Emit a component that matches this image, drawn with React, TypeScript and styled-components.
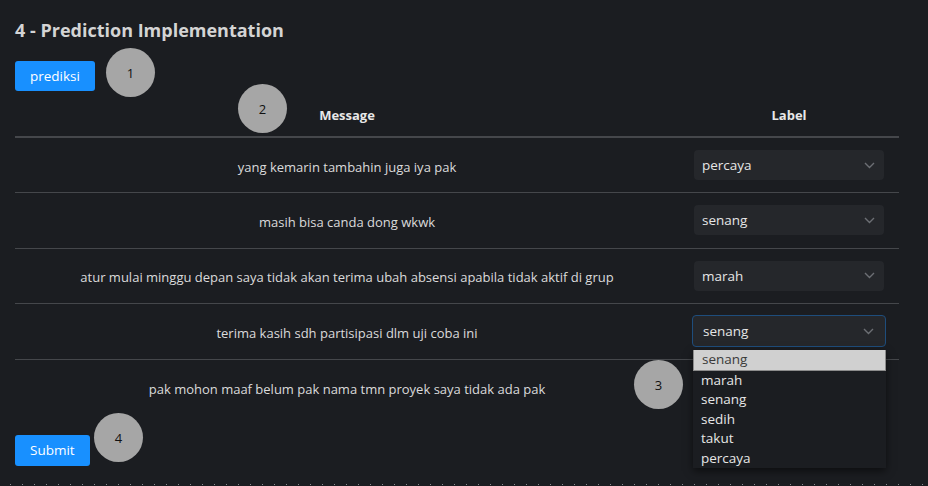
import styled, { createGlobalStyle } from "styled-components";

const GlobalStyle = createGlobalStyle`
  html, body {
    margin: 0;
    padding: 0;
    background-color: #1b1d21;
    font-family: "Open Sans", "Noto Sans", sans-serif;
    color: rgba(255, 255, 255, 0.85);
  }
`;

const Page = styled.div`
  position: relative;
  width: 928px;
  height: 486px;
  box-sizing: border-box;
  padding: 16px 29px 0 15px;
  overflow: hidden;
  &::after {
    content: "";
    position: absolute;
    left: 0;
    right: 0;
    bottom: 1px;
    height: 1px;
    background: repeating-linear-gradient(
      to right,
      transparent 0,
      transparent 10px,
      #8a8c90 10px,
      #8a8c90 11px,
      transparent 11px,
      transparent 12px
    );
  }
`;

const Title = styled.h2`
  margin: 0;
  font-size: 18px;
  font-weight: 700;
  line-height: 28px;
  color: #d4d4d4;
`;

const Button = styled.button<{ $h: number }>`
  display: block;
  height: ${(p) => p.$h}px;
  padding: 0 15px;
  border: none;
  border-radius: 3px;
  background-color: #1890ff;
  color: #fff;
  font-family: inherit;
  font-size: 13.5px;
`;

const Table = styled.table`
  width: 100%;
  border-collapse: collapse;
  margin-top: 2px;
  font-size: 13px;
`;

const HeadCell = styled.th`
  height: 43px;
  padding: 0;
  text-align: center;
  font-weight: 700;
  color: #e8e8e8;
  border-bottom: 2px solid #45474b;
`;

const Row = styled.tr<{ $last?: boolean }>`
  border-bottom: ${(p) => (p.$last ? "none" : "1px solid #45474b")};
`;

const MessageCell = styled.td`
  height: 55.5px;
  padding: 3px 0 0;
  box-sizing: border-box;
  text-align: center;
`;

const LabelCell = styled.td`
  width: 220px;
  padding: 0 15px;
  box-sizing: border-box;
`;

const SelectWrap = styled.div`
  position: relative;
`;

const SelectBox = styled.div<{ $focused?: boolean }>`
  display: flex;
  align-items: center;
  justify-content: space-between;
  box-sizing: border-box;
  border-radius: 4px;
  background-color: #25272b;
  color: #e6e6e6;
  font-size: 13.5px;
  margin: ${(p) => (p.$focused ? "0 -2px" : "0")};
  height: ${(p) => (p.$focused ? "32px" : "30px")};
  padding-left: ${(p) => (p.$focused ? "10px" : "8px")};
  padding-right: ${(p) => (p.$focused ? "11px" : "9px")};
  border: ${(p) => (p.$focused ? "1.5px solid #1e4d7c" : "none")};
`;

const Menu = styled.ul`
  position: absolute;
  top: 35px;
  left: -1px;
  right: -2px;
  margin: 0;
  padding: 0;
  list-style: none;
  background-color: #1b1d21;
  box-shadow: 0 3px 8px rgba(0, 0, 0, 0.55);
  font-size: 13.5px;
  z-index: 2;
`;

const MenuItem = styled.li<{ $active?: boolean }>`
  height: 19.5px;
  line-height: 19.5px;
  padding-left: 8px;
  background-color: ${(p) => (p.$active ? "#d0d0d0" : "transparent")};
  color: ${(p) => (p.$active ? "#3a3a3a" : "#e6e6e6")};
  border: ${(p) => (p.$active ? "1px solid #8c8c8c" : "none")};
  border-width: ${(p) => (p.$active ? "0 1px 1px 1px" : "0")};
`;

const Marker = styled.div<{ $x: number; $y: number }>`
  position: absolute;
  left: ${(p) => p.$x - 24}px;
  top: ${(p) => p.$y - 24}px;
  width: 49px;
  height: 49px;
  border-radius: 50%;
  background-color: #a6a6a6;
  color: #111;
  display: flex;
  align-items: center;
  justify-content: center;
  font-size: 13px;
  z-index: 3;
`;

const ButtonRow = styled.div`
  margin-top: 20px;
`;

const TopRow = styled.div`
  margin-top: 17px;
`;

const Chevron = () => (
  <svg width="11" height="7" viewBox="0 0 11 7">
    <polyline
      points="1,1 5.5,5.5 10,1"
      fill="none"
      stroke="#6c6f74"
      strokeWidth="1.4"
    />
  </svg>
);

const OPTIONS = ["marah", "senang", "sedih", "takut", "percaya"];

const rows = [
  { message: "yang kemarin tambahin juga iya pak", label: "percaya" },
  { message: "masih bisa canda dong wkwk", label: "senang" },
  {
    message:
      "atur mulai minggu depan saya tidak akan terima ubah absensi apabila tidak aktif di grup",
    label: "marah",
  },
  { message: "terima kasih sdh partisipasi dlm uji coba ini", label: "senang", open: true },
  { message: "pak mohon maaf belum pak nama tmn proyek saya tidak ada pak", label: null },
];

function App() {
  return (
    <>
      <GlobalStyle />
      <Page>
        <Title>4 - Prediction Implementation</Title>
        <TopRow>
          <Button $h={30}>prediksi</Button>
        </TopRow>
        <Table>
          <thead>
            <tr>
              <HeadCell>Message</HeadCell>
              <HeadCell>Label</HeadCell>
            </tr>
          </thead>
          <tbody>
            {rows.map((row, i) => (
              <Row key={i} $last={i === rows.length - 1}>
                <MessageCell>{row.message}</MessageCell>
                <LabelCell>
                  {row.label && (
                    <SelectWrap>
                      <SelectBox $focused={row.open}>
                        <span>{row.label}</span>
                        <Chevron />
                      </SelectBox>
                      {row.open && (
                        <Menu>
                          <MenuItem $active>senang</MenuItem>
                          {OPTIONS.map((o) => (
                            <MenuItem key={o}>{o}</MenuItem>
                          ))}
                        </Menu>
                      )}
                    </SelectWrap>
                  )}
                </LabelCell>
              </Row>
            ))}
          </tbody>
        </Table>
        <ButtonRow>
          <Button $h={31}>Submit</Button>
        </ButtonRow>
        <Marker $x={130} $y={72}>1</Marker>
        <Marker $x={262} $y={108}>2</Marker>
        <Marker $x={658} $y={384}>3</Marker>
        <Marker $x={118} $y={437}>4</Marker>
      </Page>
    </>
  );
}

export default App;
